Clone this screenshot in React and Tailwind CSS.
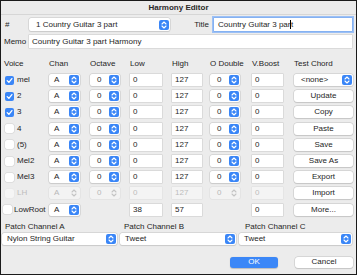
import React from "react";

const font = { fontFamily: '"Liberation Sans", Arial, sans-serif' };

function Stepper({ disabled }) {
  return (
    <div
      className={
        "w-[10px] h-[10px] rounded-[2px] flex items-center justify-center shrink-0 " +
        (disabled ? "bg-transparent" : "bg-[#3a86f7]")
      }
    >
      <svg width="6" height="8" viewBox="0 0 6 8">
        <path d="M1 3 L3 1 L5 3" fill="none" stroke={disabled ? "#c4c4c4" : "#fff"} strokeWidth="1.1" strokeLinecap="round" strokeLinejoin="round" />
        <path d="M1 5 L3 7 L5 5" fill="none" stroke={disabled ? "#c4c4c4" : "#fff"} strokeWidth="1.1" strokeLinecap="round" strokeLinejoin="round" />
      </svg>
    </div>
  );
}

function Select({ w, value, pl = "pl-[5px]", disabled, h = "h-[12px]", center }) {
  return (
    <div
      className={
        `${w} ${h} flex items-center rounded-[2px] pr-[1px] ` +
        (disabled
          ? "bg-[#f3f3f3] shadow-[0_0_0_0.5px_#dcdcdc] text-[#b8b8b8]"
          : "bg-white shadow-[0_0_0_0.5px_#c6c6c6,0_0.5px_1px_rgba(0,0,0,0.12)] text-[#1e1e1e]")
      }
    >
      <span className={`flex-1 whitespace-nowrap overflow-hidden ${center ? "text-center" : pl}`}>{value}</span>
      <Stepper disabled={disabled} />
    </div>
  );
}

function Input({ w, value, disabled, h = "h-[12px]" }) {
  return (
    <div
      className={
        `${w} ${h} flex items-center pl-[3px] ` +
        (disabled
          ? "bg-[#f4f4f4] shadow-[0_0_0_0.5px_#dddddd] text-[#bdbdbd]"
          : "bg-white shadow-[0_0_0_0.5px_#c8c8c8] text-[#1e1e1e]")
      }
    >
      {value}
    </div>
  );
}

function Button({ w, label, h = "h-[12px]" }) {
  return (
    <div
      className={`${w} ${h} flex items-center justify-center rounded-[3px] bg-white text-[#1e1e1e] shadow-[0_0_0_0.5px_#c4c4c4,0_0.5px_1px_rgba(0,0,0,0.15)]`}
    >
      {label}
    </div>
  );
}

function Check({ checked, disabled }) {
  if (checked)
    return (
      <div className="w-[9px] h-[9px] rounded-[2px] bg-[#3a86f7] flex items-center justify-center shrink-0">
        <svg width="7" height="7" viewBox="0 0 7 7">
          <path d="M1.2 3.6 L2.9 5.3 L5.9 1.6" fill="none" stroke="#fff" strokeWidth="1.3" strokeLinecap="round" strokeLinejoin="round" />
        </svg>
      </div>
    );
  return (
    <div
      className={
        "w-[9px] h-[9px] rounded-[2px] shrink-0 " +
        (disabled ? "bg-[#f5f5f5] shadow-[0_0_0_0.5px_#e6e6e6]" : "bg-white shadow-[0_0_0_0.5px_#cfcfcf]")
      }
    />
  );
}

const rows = [
  { label: "mel", checked: true, right: "select" },
  { label: "2", checked: true, right: "Update" },
  { label: "3", checked: true, right: "Copy" },
  { label: "4", right: "Paste" },
  { label: "(5)", right: "Save" },
  { label: "Mel2", right: "Save As" },
  { label: "Mel3", right: "Export" },
  { label: "LH", disabled: true, right: "Import" },
  { label: "LowRoot", lowroot: true, right: "More..." },
];

export default function App() {
  return (
    <div
      style={font}
      className="w-[357px] h-[275px] box-border border border-[#1a1a1a] bg-[#ececec] text-[8px] leading-none text-[#1e1e1e] flex flex-col overflow-hidden"
    >
      {/* title bar */}
      <div className="h-[14px] shrink-0 flex items-center justify-center font-bold bg-[#ebebeb] border-b border-[#d6d6d6] text-[#2a2a2a]">
        Harmony Editor
      </div>

      {/* row 1 */}
      <div className="mt-[3px] h-[13px] flex items-center">
        <div className="w-[28px] pl-[4px]">#</div>
        <Select w="w-[141px]" h="h-[13px]" value="1 Country Guitar 3 part" pl="pl-[7px]" />
        <div className="w-[44px] text-right pr-[5px]">Title</div>
        <div className="w-[138px] h-[13px] flex items-center pl-[4px] bg-white shadow-[0_0_0_0.5px_#6fa2ee,0_0_0_2px_#9cc0f5]">
          Country Guitar 3 par<span className="inline-block w-[0.5px] h-[9px] bg-black" />t
        </div>
      </div>

      {/* row 2 */}
      <div className="mt-[4px] h-[13px] flex items-center">
        <div className="w-[28px] pl-[3px]">Memo</div>
        <div className="w-[323px] h-[13px] flex items-center pl-[3px] bg-white shadow-[0_0_0_0.5px_#c8c8c8]">
          Country Guitar 3 part Harmony
        </div>
      </div>

      {/* grid */}
      <div className="mt-[11px] grid grid-cols-[48px_41px_40px_42px_38px_42px_42px_59px] grid-rows-[13px_repeat(9,16.2px)] items-center">
        <div className="pl-[3px] self-start pt-[1px]">Voice</div>
        <div className="self-start pt-[1px]">Chan</div>
        <div className="self-start pt-[1px]">Octave</div>
        <div className="self-start pt-[1px]">Low</div>
        <div className="self-start pt-[1px]">High</div>
        <div className="self-start pt-[1px]">O Double</div>
        <div className="self-start pt-[1px]">V.Boost</div>
        <div className="self-start pt-[1px]">Test Chord</div>

        {rows.map((r) => (
          <React.Fragment key={r.label}>
            <div className={"flex items-center " + (r.lowroot ? "pl-[2px]" : "pl-[4px]")}>
              <Check checked={r.checked} disabled={r.disabled} />
              <span className={(r.lowroot ? "ml-[2px]" : "ml-[3px]") + (r.disabled ? " text-[#bdbdbd]" : "")}>{r.label}</span>
            </div>
            <div>
              <Select w="w-[31px]" value="A" pl="pl-[5px]" disabled={r.disabled} />
            </div>
            <div>{!r.lowroot && <Select w="w-[30px]" value="0" pl="pl-[7px]" disabled={r.disabled} />}</div>
            <div>
              <Input w="w-[32px]" value={r.lowroot ? "38" : "0"} disabled={r.disabled} />
            </div>
            <div>
              <Input w="w-[30px]" value={r.lowroot ? "57" : "127"} disabled={r.disabled} />
            </div>
            <div>{!r.lowroot && <Select w="w-[30px]" value="0" pl="pl-[7px]" disabled={r.disabled} />}</div>
            <div>
              <Input w="w-[31px]" value="0" disabled={r.disabled} />
            </div>
            <div>
              {r.right === "select" ? (
                <Select w="w-[59px]" value="<none>" pl="pl-[7px]" />
              ) : (
                <Button w="w-[59px]" label={r.right} />
              )}
            </div>
          </React.Fragment>
        ))}
      </div>

      {/* patch labels */}
      <div className="mt-[5px] flex">
        <div className="w-[120px] pl-[4px]">Patch Channel A</div>
        <div className="w-[119px] pl-[3px]">Patch Channel B</div>
        <div className="pl-[5px]">Patch Channel C</div>
      </div>
      <div className="mt-[2px] flex">
        <div className="pl-[1px]">
          <Select w="w-[115px]" value="Nylon String Guitar" pl="pl-[5px]" />
        </div>
        <div className="pl-[3px]">
          <Select w="w-[116px]" value="Tweet" pl="pl-[5px]" />
        </div>
        <div className="pl-[3px]">
          <Select w="w-[113px]" value="Tweet" pl="pl-[5px]" />
        </div>
      </div>

      {/* buttons */}
      <div className="mt-[12px] flex">
        <div className="ml-[229px] w-[48px] h-[11px] rounded-[3px] bg-[#3b87f7] text-white flex items-center justify-center shadow-[0_0.5px_1px_rgba(0,0,0,0.2)]">
          OK
        </div>
        <div className="ml-[17px]">
          <Button w="w-[58px]" h="h-[11px]" label="Cancel" />
        </div>
      </div>
    </div>
  );
}
